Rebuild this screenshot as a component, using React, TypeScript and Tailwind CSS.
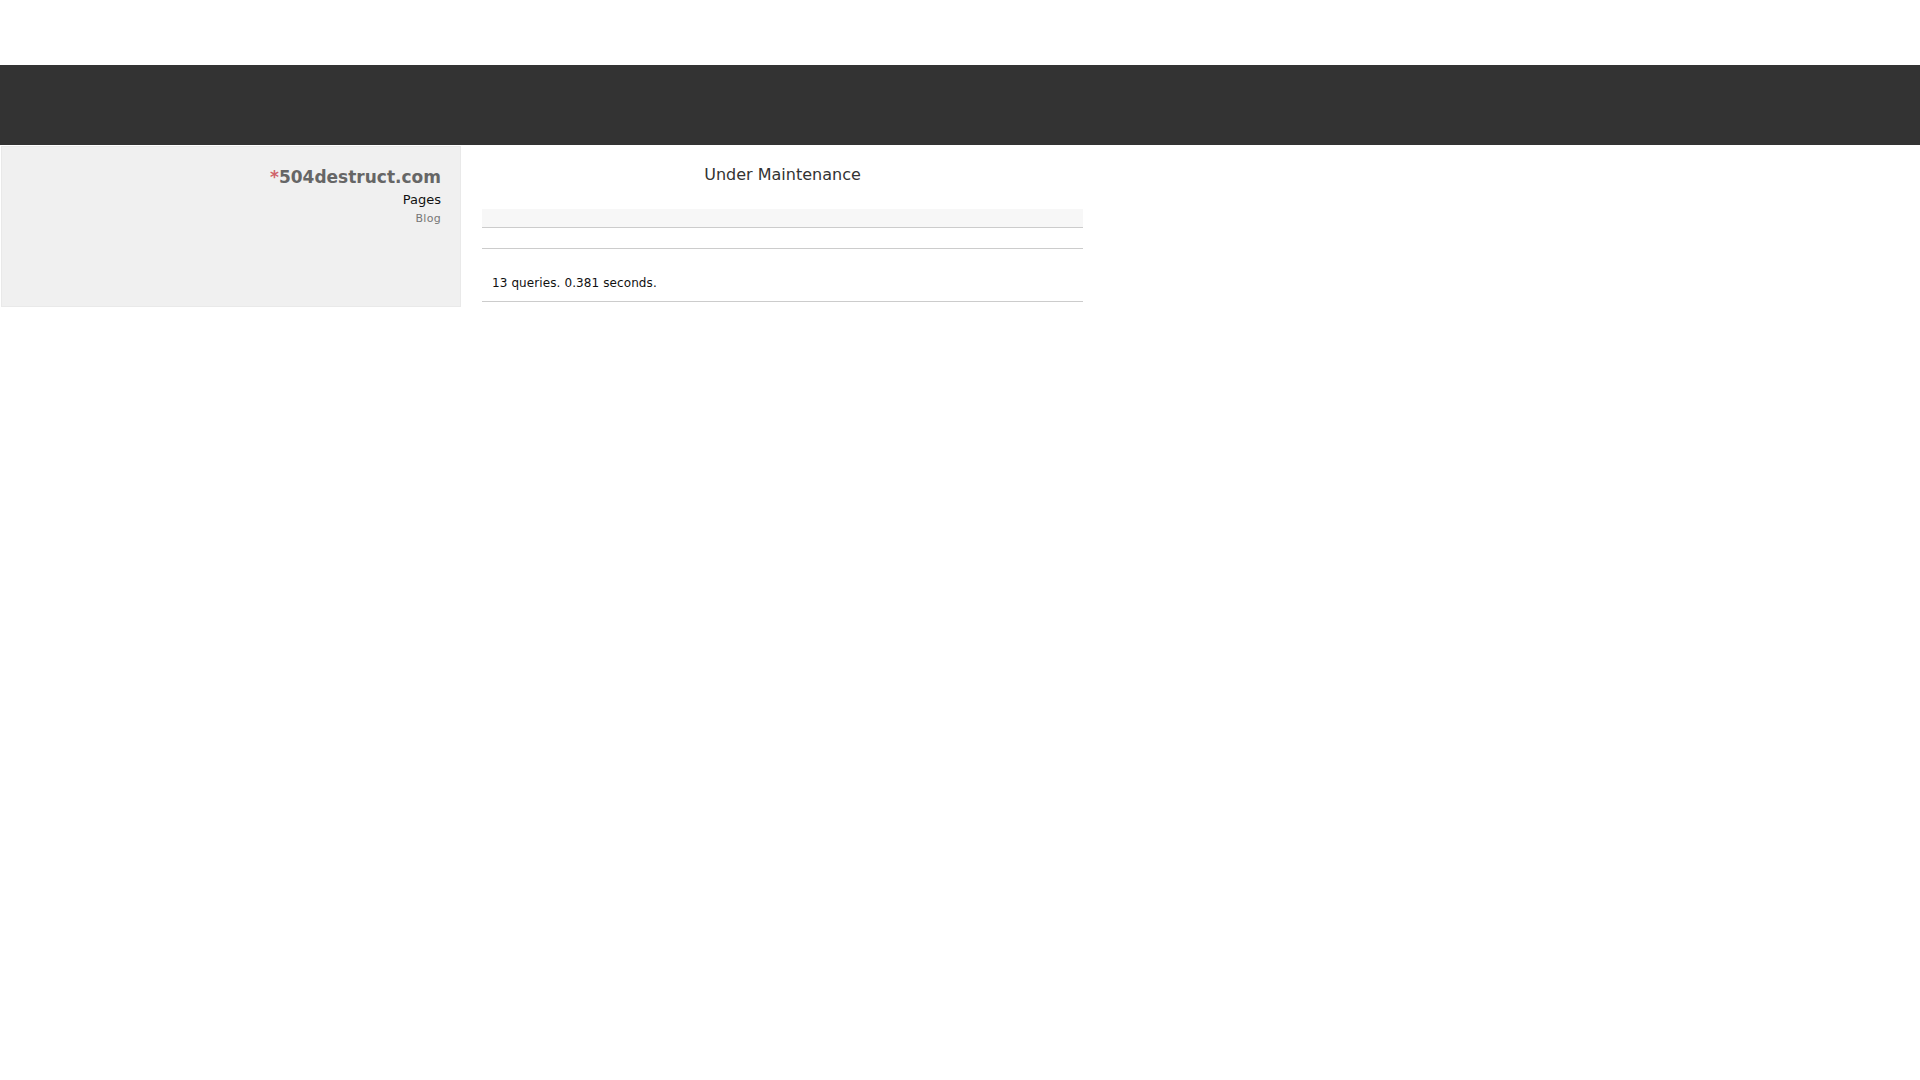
import React from "react";

function Sidebar() {
  return (
    <aside className="ml-[1px] w-[460px] h-[161px] bg-[#f0f0f0] border border-[#e9e9e9] pr-[19px] pt-[20px] text-right shrink-0">
      <h1 className="text-[17px] leading-[20px] font-bold text-[#666]">
        <span className="text-[#d0646c]">*</span>504destruct.com
      </h1>
      <nav className="mt-[5px] flex flex-col items-end">
        <a className="text-[13px] leading-[15px] font-normal text-[#111]">Pages</a>
        <a className="mt-[5px] text-[11px] leading-[13px] tracking-[0.3px] text-[#777]">Blog</a>
      </nav>
    </aside>
  );
}

function Main() {
  return (
    <main className="ml-[21px] w-[601px] pt-[19px]">
      <h2 className="text-center text-[16px] leading-[19px] text-[#333]">Under Maintenance</h2>
      <div className="mt-[25px] h-[19px] bg-[#f7f7f7] border-b border-[#cccccc]" />
      <div className="h-[21px] border-b border-[#cccccc]" />
      <div className="pt-[27px] pb-[11px] pl-[10px] border-b border-[#cccccc] text-[12px] leading-[14px] tracking-[0.1px] text-[#111]">
        13 queries. 0.381 seconds.
      </div>
    </main>
  );
}

export default function App() {
  return (
    <div className="min-h-screen bg-white font-['DejaVu_Sans',sans-serif]">
      <div className="h-[65px]" />
      <header className="h-[80px] bg-[#333333]" />
      <div className="mt-[1px] flex items-start">
        <Sidebar />
        <Main />
      </div>
    </div>
  );
}
